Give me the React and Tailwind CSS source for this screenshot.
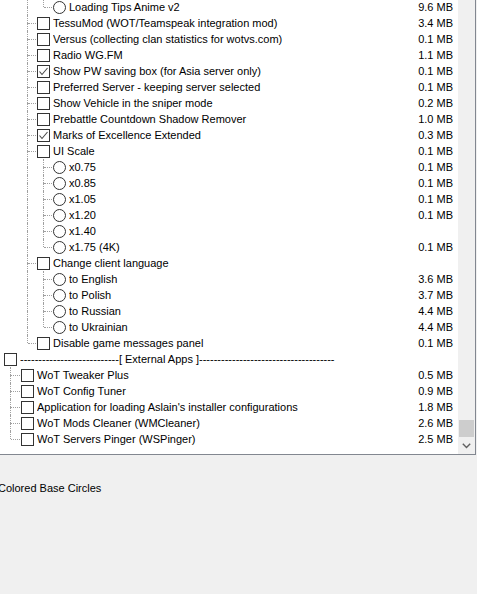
import React from "react";

const rows = [
  { g: ["n", "p", "e"], k: "r", label: "Loading Tips Anime v2", size: "9.6 MB" },
  { g: ["n", "t"], k: "c", label: "TessuMod (WOT/Teamspeak integration mod)", size: "3.4 MB" },
  { g: ["n", "t"], k: "c", label: "Versus (collecting clan statistics for wotvs.com)", size: "0.1 MB" },
  { g: ["n", "t"], k: "c", label: "Radio WG.FM", size: "1.1 MB" },
  { g: ["n", "t"], k: "c", on: true, label: "Show PW saving box (for Asia server only)", size: "0.1 MB" },
  { g: ["n", "t"], k: "c", label: "Preferred Server - keeping server selected", size: "0.1 MB" },
  { g: ["n", "t"], k: "c", label: "Show Vehicle in the sniper mode", size: "0.2 MB" },
  { g: ["n", "t"], k: "c", label: "Prebattle Countdown Shadow Remover", size: "1.0 MB" },
  { g: ["n", "t"], k: "c", on: true, label: "Marks of Excellence Extended", size: "0.3 MB" },
  { g: ["n", "t"], k: "c", label: "UI Scale", size: "0.1 MB" },
  { g: ["n", "p", "t"], k: "r", label: "x0.75", size: "0.1 MB" },
  { g: ["n", "p", "t"], k: "r", label: "x0.85", size: "0.1 MB" },
  { g: ["n", "p", "t"], k: "r", label: "x1.05", size: "0.1 MB" },
  { g: ["n", "p", "t"], k: "r", label: "x1.20", size: "0.1 MB" },
  { g: ["n", "p", "t"], k: "r", label: "x1.40", size: "" },
  { g: ["n", "p", "e"], k: "r", label: "x1.75 (4K)", size: "0.1 MB" },
  { g: ["n", "t"], k: "c", label: "Change client language", size: "" },
  { g: ["n", "p", "t"], k: "r", label: "to English", size: "3.6 MB" },
  { g: ["n", "p", "t"], k: "r", label: "to Polish", size: "3.7 MB" },
  { g: ["n", "p", "t"], k: "r", label: "to Russian", size: "4.4 MB" },
  { g: ["n", "p", "e"], k: "r", label: "to Ukrainian", size: "4.4 MB" },
  { g: ["n", "e"], k: "c", label: "Disable game messages panel", size: "0.1 MB" },
  {
    g: [],
    k: "c",
    label:
      "---------------------------[ External Apps ]-------------------------------------",
    size: "",
  },
  { g: ["t"], k: "c", label: "WoT Tweaker Plus", size: "0.5 MB" },
  { g: ["t"], k: "c", label: "WoT Config Tuner", size: "0.9 MB" },
  { g: ["t"], k: "c", label: "Application for loading Aslain's installer configurations", size: "1.8 MB" },
  { g: ["t"], k: "c", label: "WoT Mods Cleaner (WMCleaner)", size: "2.6 MB" },
  { g: ["e"], k: "c", label: "WoT Servers Pinger (WSPinger)", size: "2.5 MB" },
];

function Cell({ type, first }) {
  const top = type === "p" || type === "t" || type === "e";
  const bottom = type === "p" || type === "t";
  const stub = type === "t" || type === "e";
  return (
    <div className={`flex h-4 shrink-0 ${first ? "w-[17px]" : "w-[16px]"}`}>
      <div className="w-[6px] shrink-0" />
      <div className="flex w-px shrink-0 flex-col">
        <div className={`h-2 ${top ? "border-l border-dotted border-[#a0a0a0]" : ""}`} />
        <div className={`h-2 ${bottom ? "border-l border-dotted border-[#a0a0a0]" : ""}`} />
      </div>
      <div className="flex flex-1 flex-col">
        <div className="h-2" />
        <div className={`mr-px ${stub ? "border-t border-dotted border-[#a0a0a0]" : ""}`} />
      </div>
    </div>
  );
}

function Box({ on }) {
  return (
    <div className="flex h-[13px] w-[13px] shrink-0 items-center justify-center border border-[#333333] bg-white">
      {on && (
        <svg width="11" height="11" viewBox="0 0 11 11">
          <polyline points="1.5,5.5 4,8.5 9.5,2" fill="none" stroke="#4a4a4a" strokeWidth="1.1" />
        </svg>
      )}
    </div>
  );
}

function Radio() {
  return <div className="h-[13px] w-[13px] shrink-0 rounded-full border border-[#333333] bg-white" />;
}

export default function App() {
  return (
    <div className="h-[594px] w-[477px] overflow-hidden bg-[#f0f0f0] font-['Liberation_Sans',Arial,sans-serif] text-[11px] text-black">
      <div className="flex h-[455px] w-[476px] border-b border-r border-[#828790] bg-white">
        <div className="flex-1 overflow-hidden">
          <div className="-mt-px flex flex-col">
            {rows.map((r, i) => (
              <div key={i} className="flex h-4 items-center pl-[4px]">
                {r.g.map((c, j) => (
                  <Cell key={j} type={c} first={j === 0} />
                ))}
                {r.k === "c" ? <Box on={r.on} /> : <Radio />}
                <div className="ml-[3px] flex-1 overflow-hidden whitespace-nowrap leading-4">{r.label}</div>
                <div className="whitespace-nowrap pl-2 pr-[5px] leading-4">{r.size}</div>
              </div>
            ))}
          </div>
        </div>
        <div className="flex w-[17px] shrink-0 flex-col justify-end bg-[#f0f0f0]">
          <div className="mx-px h-[17px] bg-[#cdcdcd]" />
          <div className="flex h-[17px] items-center justify-center">
            <svg width="9" height="6" viewBox="0 0 9 6">
              <polyline points="0.8,0.8 4.5,4.5 8.2,0.8" fill="none" stroke="#606060" strokeWidth="1.4" />
            </svg>
          </div>
        </div>
      </div>
      <div className="-ml-[2px] pt-[25px] leading-4">Colored Base Circles</div>
    </div>
  );
}
